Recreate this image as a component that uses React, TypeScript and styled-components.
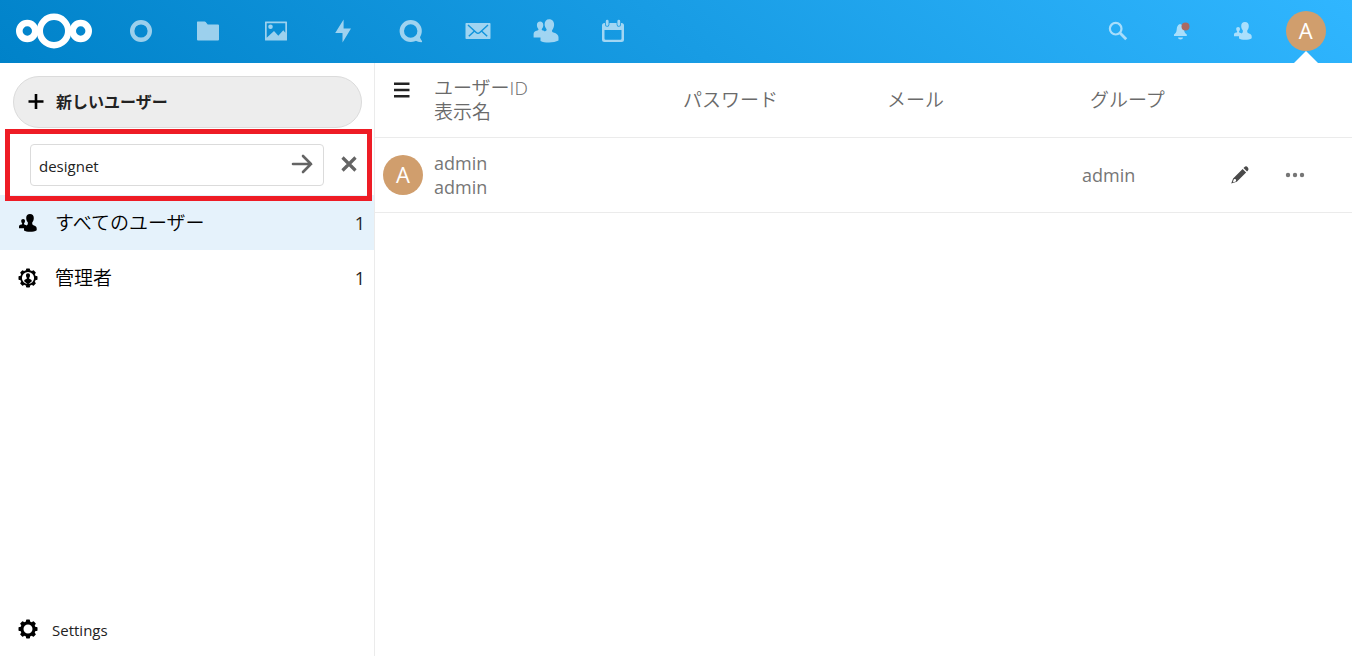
import React from "react";
import styled, { createGlobalStyle } from "styled-components";

const GlobalStyle = createGlobalStyle`
  * { box-sizing: border-box; }
  body {
    margin: 0;
    background: #fff;
    color: #222;
    font-family: "Open Sans", "Noto Sans CJK JP", sans-serif;
    font-size: 15px;
  }
  button, input { font: inherit; color: inherit; }
`;

const Page = styled.div`
  min-height: 100vh;
  display: flex;
  flex-direction: column;
`;

const TopBar = styled.header`
  height: 63px;
  flex: none;
  display: flex;
  align-items: stretch;
  padding: 0 15px 0 16px;
  background: linear-gradient(40deg, #0082c9 0%, #30b6ff 100%);
`;

const LogoLink = styled.a`
  display: flex;
  align-items: center;
  width: 91px;
  padding-bottom: 1px;
`;

const AppNav = styled.nav`
  display: flex;
  width: 540px;
`;

const AppLink = styled.a`
  flex: 1;
  display: flex;
  align-items: center;
  justify-content: center;
  padding-bottom: 1px;
  color: #fff;
  opacity: 0.6;
`;

const Tools = styled.div`
  display: flex;
  width: 250px;
  margin-left: auto;
`;

const ToolButton = styled.button<{ $dim?: boolean }>`
  position: relative;
  flex: 1;
  display: flex;
  align-items: center;
  justify-content: center;
  padding: 0 0 1px;
  border: 0;
  background: none;
  color: #fff;
  opacity: ${(p) => (p.$dim ? 0.6 : 1)};
`;

const Avatar = styled.span`
  display: flex;
  align-items: center;
  justify-content: center;
  width: 40px;
  height: 40px;
  border-radius: 50%;
  background: #d09e6d;
  color: #fff;
  font-size: 22px;
  line-height: 38px;
  padding-bottom: 2px;
`;

const Pointer = styled.span`
  position: absolute;
  bottom: 0;
  left: 50%;
  margin-left: -12px;
  border: 12px solid transparent;
  border-top: 0;
  border-bottom-color: #fff;
`;

const Body = styled.div`
  flex: 1;
  display: flex;
`;

const Sidebar = styled.aside`
  flex: none;
  width: 375px;
  display: flex;
  flex-direction: column;
  padding-top: 13px;
  border-right: 1px solid #ebebeb;
`;

const NewUserButton = styled.button`
  height: 52px;
  margin: 0 12px 0 13px;
  padding: 0 14px 2px;
  display: flex;
  align-items: center;
  gap: 11px;
  border: 1px solid #dbdbdb;
  border-radius: 26px;
  background: #ededed;
  font-size: 16px;
  font-weight: 700;
`;

const GroupForm = styled.form`
  position: relative;
  display: flex;
  align-items: center;
  padding: 16px 4px 9px 30px;
`;

const Field = styled.div`
  flex: 1;
  display: flex;
  height: 42px;
  border: 1px solid #dbdbdb;
  border-radius: 4px;
  background: #fff;
`;

const GroupInput = styled.input`
  flex: 1;
  min-width: 0;
  padding: 2px 8px 0;
  border: 0;
  outline: 0;
  background: none;
`;

const IconButton = styled.button<{ $width: number }>`
  display: inline-flex;
  align-items: center;
  justify-content: center;
  width: ${(p) => p.$width}px;
  height: 40px;
  padding: 0;
  border: 0;
  background: none;
  vertical-align: middle;
`;

const FormButton = styled(IconButton)`
  padding-bottom: 2px;
`;

const CloseButton = styled(FormButton)`
  margin-left: 4px;
`;

const Highlight = styled.div`
  position: absolute;
  inset: 1px 2px -6px 5px;
  border: 5px solid #ee1c25;
  pointer-events: none;
`;

const GroupList = styled.ul`
  list-style: none;
  margin: 0;
  padding: 0;
`;

const GroupLink = styled.a<{ $active?: boolean }>`
  display: flex;
  align-items: center;
  height: 55px;
  padding: 0 9px 0 18px;
  background: ${(p) => (p.$active ? "#e5f2fb" : "#fff")};
  color: #000;
  font-size: 19px;
  font-weight: 350;
  text-decoration: none;
`;

const GroupName = styled.span`
  flex: 1;
  margin-left: 17px;
  padding-bottom: 2px;
`;

const Count = styled.span`
  color: #222;
  font-size: 18px;
  font-weight: 400;
`;

const SettingsButton = styled.button`
  display: flex;
  align-items: center;
  gap: 14px;
  height: 55px;
  margin-top: auto;
  padding: 0 18px;
  border: 0;
  background: none;
`;

const SettingsLabel = styled.span`
  padding-top: 2px;
`;

const Content = styled.main`
  flex: 1;
  min-width: 0;
`;

const UserTable = styled.table`
  width: 100%;
  table-layout: fixed;
  border-collapse: separate;
  border-spacing: 0;
  color: #767676;
  line-height: 24px;
`;

const Col = styled.col<{ $width?: number }>`
  width: ${(p) => (p.$width ? p.$width + "px" : "auto")};
`;

const HeadCell = styled.th`
  height: 75px;
  padding: 0;
  border-bottom: 1px solid #ebebeb;
  color: #6a6a6a;
  font-size: 19px;
  font-weight: 350;
  text-align: left;
`;

const GroupHead = styled(HeadCell)`
  padding-left: 8px;
`;

const MenuHead = styled(HeadCell)`
  padding: 7px 0 0 8px;
  vertical-align: top;
`;

const Cell = styled.td`
  height: 75px;
  padding: 0;
  border-bottom: 1px solid #ebebeb;
  font-size: 18px;
`;

const AvatarCell = styled(Cell)`
  padding-left: 8px;
`;

const Logo = () => (
  <svg width="76" height="36" viewBox="0 0 76 36" fill="none" stroke="#fff">
    <circle cx="38" cy="18" r="14.2" strokeWidth="6.4" />
    <circle cx="11.3" cy="18" r="8" strokeWidth="6.6" />
    <circle cx="64.7" cy="18" r="8" strokeWidth="6.6" />
  </svg>
);

const DashboardIcon = () => (
  <svg width="24" height="24" fill="none" stroke="currentColor" strokeWidth="4.4">
    <circle cx="12" cy="12" r="8.8" />
  </svg>
);

const FolderIcon = () => (
  <svg width="24" height="20" fill="currentColor">
    <path d="M1.5.5h7.2q.6 0 1 .5l2 2.5H22q1 0 1 1v14q0 1-1 1H2q-1 0-1-1V1q0-.5.5-.5z" />
  </svg>
);

const PhotosIcon = () => (
  <svg width="24" height="20" fill="currentColor">
    <path
      fillRule="evenodd"
      d="M1.5.5h21q.5 0 .5.5v18q0 .5-.5.5h-21Q1 19.5 1 19V1q0-.5.5-.5zM2.700 2.200v14.600l7.300-6.800 4.300 4.800 5-5.600 2 2.500V2.200zM6.500 3.500a2.300 2.300 0 1 1 0 4.600 2.300 2.300 0 0 1 0-4.600z"
    />
  </svg>
);

const ActivityIcon = () => (
  <svg width="18" height="24" fill="currentColor">
    <path d="M9.600.5 1.200 14H8.500v9.500L17 9.500H9.600z" />
  </svg>
);

const TalkIcon = () => (
  <svg width="24" height="24">
    <circle cx="11.7" cy="12" r="8.9" fill="none" stroke="currentColor" strokeWidth="4.4" />
    <path d="M20.800 17.500q.6 3 2.200 4.500.5 1.200-.8 1.200-3 0-6-1.800z" fill="currentColor" />
  </svg>
);

const MailIcon = () => (
  <svg width="26" height="18">
    <mask id="mail-lines">
      <rect width="26" height="18" rx="1" fill="#fff" />
      <path d="M3 3l8.200 7.500q1.800 1.600 3.600 0L23 3M3.800 14.200l5.700-5.200M22.200 14.200l-5.700-5.200" fill="none" stroke="#000" strokeWidth="1.5" />
    </mask>
    <rect x="0.5" y="1" width="25" height="16" rx="0.8" fill="currentColor" mask="url(#mail-lines)" />
  </svg>
);

const ContactsIcon = () => (
  <svg width="26" height="24" fill="currentColor">
    <path d="M16.200.2c3 0 4.900 2.200 4.900 5.300 0 2.200-.7 4.200-2 5.700-.2 1.200.1 2 1.400 2.400 3.300 1 5 2.500 5 4.700v3.300c-2.500 1.300-5.700 2-9.500 2-3.700 0-6.500-.6-8.500-1.700v-3.300H.6V15c0-1.700 1.300-2.700 3.800-3.400 1-.3 1.200-.9 1-1.600-1-1-1.500-2.400-1.500-3.900 0-2.200 1.300-3.600 3.200-3.600s3.200 1.400 3.200 3.600c0 1.500-.5 2.900-1.500 3.900-.2.800.1 1.300 1 1.500.8.200 1.500.5 2 .9 1.200-.7 1.800-.7 1.800-2.200-1.300-1.400-2-3.300-2-5 0-3 1.700-5 4.600-5z" />
  </svg>
);

const CalendarIcon = () => (
  <svg width="24" height="24" fill="none" stroke="currentColor">
    <path
      fill="currentColor"
      stroke="none"
      fillRule="evenodd"
      d="M3.500 4H4v1.500a2.200 2.200 0 0 0 4.400 0V4h7.200v1.500a2.200 2.200 0 0 0 4.400 0V4h.5q2.500 0 2.500 2.500v14q0 2.500-2.500 2.500h-17Q1 23 1 20.500v-14Q1 4 3.500 4zM3.500 11v8.500q0 1.200 1.200 1.200h14.600q1.200 0 1.200-1.200V11z"
    />
    <path d="M6.200 2.200v3.400M17.800 2.200v3.400" strokeWidth="2.8" strokeLinecap="round" />
  </svg>
);

const SearchIcon = () => (
  <svg width="20" height="20" fill="none" stroke="currentColor">
    <circle cx="7.7" cy="7.7" r="5.8" strokeWidth="2.2" />
    <path d="M11.800 11.800l6.400 6.400" strokeWidth="2.8" />
  </svg>
);

const BellIcon = () => (
  <svg width="20" height="20" fill="currentColor">
    <path d="M9 3c2.600.6 3.900 2.800 4.100 5.500.1 2.500.9 3.700 2.700 5V15H3v-1.500c1.800-1.300 2.500-2.500 2.700-5C5.900 5.800 6.700 3.600 9 3zM7 16.500h5a2.500 2 0 0 1-5 0z" />
    <circle cx="14.5" cy="5.500" r="4" fill="#ff3d00" />
  </svg>
);

const UsersIcon = () => (
  <svg width="20" height="20" fill="currentColor">
    <path d="M12 1c2.400 0 3.800 1.600 3.800 4 0 1.800-.6 3.200-1.500 4.300-.3 2 .2 2.700 1.700 3.200 2 .7 2.700 1.700 2.700 3v1.800c-1.600 1-3.900 1.500-6.700 1.500-2.700 0-4.800-.5-6-1.300v-2.300H1v-1.600c0-1 .7-1.600 2.300-2 .8-.2 1-.6.800-1.400-.6-.6-.9-1.500-.9-2.300C3.200 6.700 4 6 5.100 6S7 6.700 7 7.900c0 .8-.3 1.700-.9 2.300-.2.800 0 1.200.8 1.500.7.200 1.200.5 1.500.8 1.200-.5 1.700-1.200 1.400-3.200C8.900 8.200 8.200 6.800 8.200 5c0-2.400 1.400-4 3.800-4z" />
  </svg>
);

const GEAR_TEETH = [0, 45, 90, 135, 180, 225, 270, 315];

const GearIcon = ({ person }: { person?: boolean }) => (
  <svg width="20" height="20" viewBox="0 0 20 20">
    {GEAR_TEETH.map((angle) => (
      <rect key={angle} x="8" y="0.5" width="4" height={person ? 2.6 : 4} rx="0.8" transform={`rotate(${angle} 10 10)`} />
    ))}
    <circle cx="10" cy="10" r={person ? 7 : 6.1} fill="none" stroke="#000" strokeWidth={person ? 1.8 : 3.2} />
    {person && (
      <path d="M10 5.200c1.300 0 2 .9 2 2.200 0 1-.3 1.700-.8 2.300-.1 1 .1 1.300 1 1.600 1.200.4 1.600.9 1.600 1.900L10 16.500 6.200 13.200c0-1 .4-1.500 1.600-1.900.9-.3 1.100-.6 1-1.600C8.300 9.100 8 8.400 8 7.400c0-1.300.7-2.200 2-2.200z" />
    )}
  </svg>
);

const PlusIcon = () => (
  <svg width="17" height="17" stroke="#000" strokeWidth="2.6">
    <path d="M8 1v15M.5 8.500h15" />
  </svg>
);

const ArrowIcon = () => (
  <svg width="22" height="22" fill="none" stroke="#646464" strokeWidth="2.6" strokeLinecap="round">
    <path d="M2 11h18M12 3l8 8-8 8" />
  </svg>
);

const CloseIcon = () => (
  <svg width="16" height="16" stroke="#646464" strokeWidth="3.2">
    <path d="M1.500 1.500l13 13M14.500 1.500l-13 13" />
  </svg>
);

const MenuIcon = () => (
  <svg width="16" height="16" fill="#222">
    <path d="M0 .5h15.500v2.500H0zM0 6.700h15.500v2.500H0zM0 13h15.500v2.500H0z" />
  </svg>
);

const PencilIcon = () => (
  <svg width="20" height="20" fill="#4a4a4a">
    <path d="M14.500 2q1.600-1.400 3.200.2 1.600 1.700.3 3.300l-1 1L13.500 3z" />
    <path
      fillRule="evenodd"
      d="M12.600 3.900l3.500 3.500-9.300 9.400L1.200 18.600l1.900-5.200zM4 14l-1 2.600.6.600 2.500-1-.2-1.900z"
    />
  </svg>
);

const DotsIcon = () => (
  <svg width="20" height="6" fill="#767676">
    <circle cx="3" cy="3" r="2.2" />
    <circle cx="10" cy="3" r="2.2" />
    <circle cx="17" cy="3" r="2.2" />
  </svg>
);

const apps = [
  { name: "ダッシュボード", Icon: DashboardIcon },
  { name: "ファイル", Icon: FolderIcon },
  { name: "写真", Icon: PhotosIcon },
  { name: "アクティビティ", Icon: ActivityIcon },
  { name: "Talk", Icon: TalkIcon },
  { name: "メール", Icon: MailIcon },
  { name: "連絡先", Icon: ContactsIcon },
  { name: "カレンダー", Icon: CalendarIcon },
];

const tools = [
  { name: "検索", Icon: SearchIcon },
  { name: "通知", Icon: BellIcon },
  { name: "連絡先", Icon: UsersIcon },
];

export default function App() {
  return (
    <Page>
      <GlobalStyle />
      <TopBar>
        <LogoLink href="#" aria-label="Nextcloud">
          <Logo />
        </LogoLink>
        <AppNav>
          {apps.map(({ name, Icon }) => (
            <AppLink key={name} href="#" aria-label={name}>
              <Icon />
            </AppLink>
          ))}
        </AppNav>
        <Tools>
          {tools.map(({ name, Icon }) => (
            <ToolButton key={name} type="button" aria-label={name} $dim>
              <Icon />
            </ToolButton>
          ))}
          <ToolButton type="button" aria-label="設定">
            <Avatar>A</Avatar>
            <Pointer />
          </ToolButton>
        </Tools>
      </TopBar>
      <Body>
        <Sidebar>
          <NewUserButton type="button">
            <PlusIcon />
            新しいユーザー
          </NewUserButton>
          <GroupForm onSubmit={(e) => e.preventDefault()}>
            <Field>
              <GroupInput aria-label="グループ名" defaultValue="designet" />
              <FormButton type="submit" aria-label="追加" $width={42}>
                <ArrowIcon />
              </FormButton>
            </Field>
            <CloseButton type="button" aria-label="閉じる" $width={42}>
              <CloseIcon />
            </CloseButton>
            <Highlight />
          </GroupForm>
          <GroupList>
            <li>
              <GroupLink href="#" $active>
                <UsersIcon />
                <GroupName>すべてのユーザー</GroupName>
                <Count>1</Count>
              </GroupLink>
            </li>
            <li>
              <GroupLink href="#">
                <GearIcon person />
                <GroupName>管理者</GroupName>
                <Count>1</Count>
              </GroupLink>
            </li>
          </GroupList>
          <SettingsButton type="button">
            <GearIcon />
            <SettingsLabel>Settings</SettingsLabel>
          </SettingsButton>
        </Sidebar>
        <Content>
          <UserTable>
            <colgroup>
              <Col $width={59} />
              <Col $width={249} />
              <Col $width={204} />
              <Col $width={195} />
              <Col />
              <Col $width={56} />
              <Col $width={84} />
            </colgroup>
            <thead>
              <tr>
                <MenuHead>
                  <IconButton type="button" aria-label="メニュー" $width={38}>
                    <MenuIcon />
                  </IconButton>
                </MenuHead>
                <HeadCell scope="col">
                  ユーザーID
                  <br />
                  表示名
                </HeadCell>
                <HeadCell scope="col">パスワード</HeadCell>
                <HeadCell scope="col">メール</HeadCell>
                <GroupHead scope="col">グループ</GroupHead>
                <HeadCell as="td" />
                <HeadCell as="td" />
              </tr>
            </thead>
            <tbody>
              <tr>
                <AvatarCell>
                  <Avatar>A</Avatar>
                </AvatarCell>
                <Cell>
                  admin
                  <br />
                  admin
                </Cell>
                <Cell />
                <Cell />
                <Cell>admin</Cell>
                <Cell>
                  <IconButton type="button" aria-label="編集" $width={56}>
                    <PencilIcon />
                  </IconButton>
                </Cell>
                <Cell>
                  <IconButton type="button" aria-label="その他" $width={54}>
                    <DotsIcon />
                  </IconButton>
                </Cell>
              </tr>
            </tbody>
          </UserTable>
        </Content>
      </Body>
    </Page>
  );
}
